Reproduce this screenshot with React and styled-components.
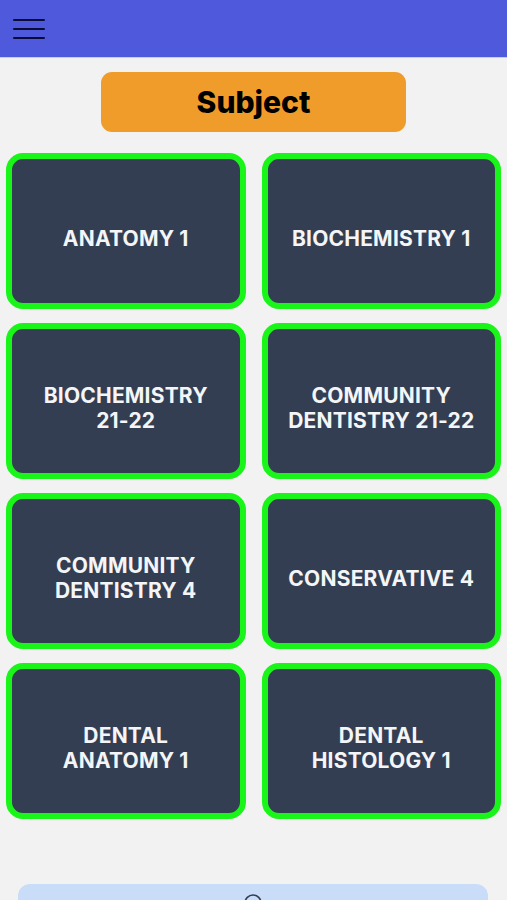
import styled, { createGlobalStyle } from 'styled-components';

const subjects = [
  ['ANATOMY 1'],
  ['BIOCHEMISTRY 1'],
  ['BIOCHEMISTRY', '21-22'],
  ['COMMUNITY', 'DENTISTRY 21-22'],
  ['COMMUNITY', 'DENTISTRY 4'],
  ['CONSERVATIVE 4'],
  ['DENTAL', 'ANATOMY 1'],
  ['DENTAL', 'HISTOLOGY 1'],
];

const GlobalStyle = createGlobalStyle`
  html, body {
    margin: 0;
    padding: 0;
    background: #f2f2f2;
    font-family: Inter, "Noto Sans", sans-serif;
  }
`;

const App = () => {
  return (
    <Page>
      <GlobalStyle />
      <Header>
        <MenuButton aria-label="menu">
          <span />
          <span />
          <span />
        </MenuButton>
      </Header>
      <Title>Subject</Title>
      <Grid>
        {subjects.map((lines) => (
          <Card key={lines.join(' ')}>
            <CardLabel>
              {lines.map((line) => (
                <Line key={line}>{line}</Line>
              ))}
            </CardLabel>
          </Card>
        ))}
      </Grid>
      <BottomBar>
        <BarIcon viewBox="0 0 20 20">
          <circle cx="10" cy="10" r="8" fill="none" stroke="#333e52" strokeWidth="1.6" />
        </BarIcon>
      </BottomBar>
    </Page>
  );
};

const Page = styled.div`
  width: 507px;
  height: 900px;
  overflow: hidden;
  display: flex;
  flex-direction: column;
  background: #f2f2f2;

  & > * {
    flex-shrink: 0;
  }
`;

const Header = styled.header`
  height: 58px;
  background: #4e5adb;
  border-bottom: 1px solid #c9ccf0;
  display: flex;
  align-items: center;
  padding-left: 13px;
  box-sizing: border-box;
`;

const MenuButton = styled.div`
  width: 32px;
  display: flex;
  flex-direction: column;
  gap: 7px;

  span {
    display: block;
    height: 2px;
    border-radius: 1px;
    background: #0b0b3a;
  }
`;

const Title = styled.div`
  align-self: center;
  width: 305px;
  height: 60px;
  margin-top: 14px;
  background: #f09c2a;
  border-radius: 11px;
  display: flex;
  align-items: center;
  justify-content: center;
  font-family: Inter, "Noto Sans", sans-serif;
  font-weight: 800;
  font-size: 30px;
  color: #000;
`;

const Grid = styled.div`
  display: grid;
  grid-template-columns: 1fr 1fr;
  column-gap: 16px;
  row-gap: 14px;
  padding: 0 6px;
  margin-top: 21px;
`;

const Card = styled.div`
  height: 156px;
  box-sizing: border-box;
  border: 6px solid #19f519;
  border-radius: 17px;
  background: #333e52;
  display: flex;
  align-items: center;
  justify-content: center;
  padding: 14px 8px 0;
`;

const CardLabel = styled.div`
  color: #f4f5f7;
  font-family: Inter, "Noto Sans", sans-serif;
  font-weight: 700;
  font-size: 21px;
  line-height: 25px;
  letter-spacing: 0.2px;
  text-align: center;
`;

const Line = styled.div`
  white-space: nowrap;
`;

const BottomBar = styled.div`
  margin: 65px 19px 0 18px;
  height: 40px;
  background: #c9dcf8;
  border-radius: 12px 12px 0 0;
  display: flex;
  justify-content: center;
  padding-top: 9px;
  box-sizing: border-box;
`;

const BarIcon = styled.svg`
  width: 20px;
  height: 20px;
`;

export default App;
